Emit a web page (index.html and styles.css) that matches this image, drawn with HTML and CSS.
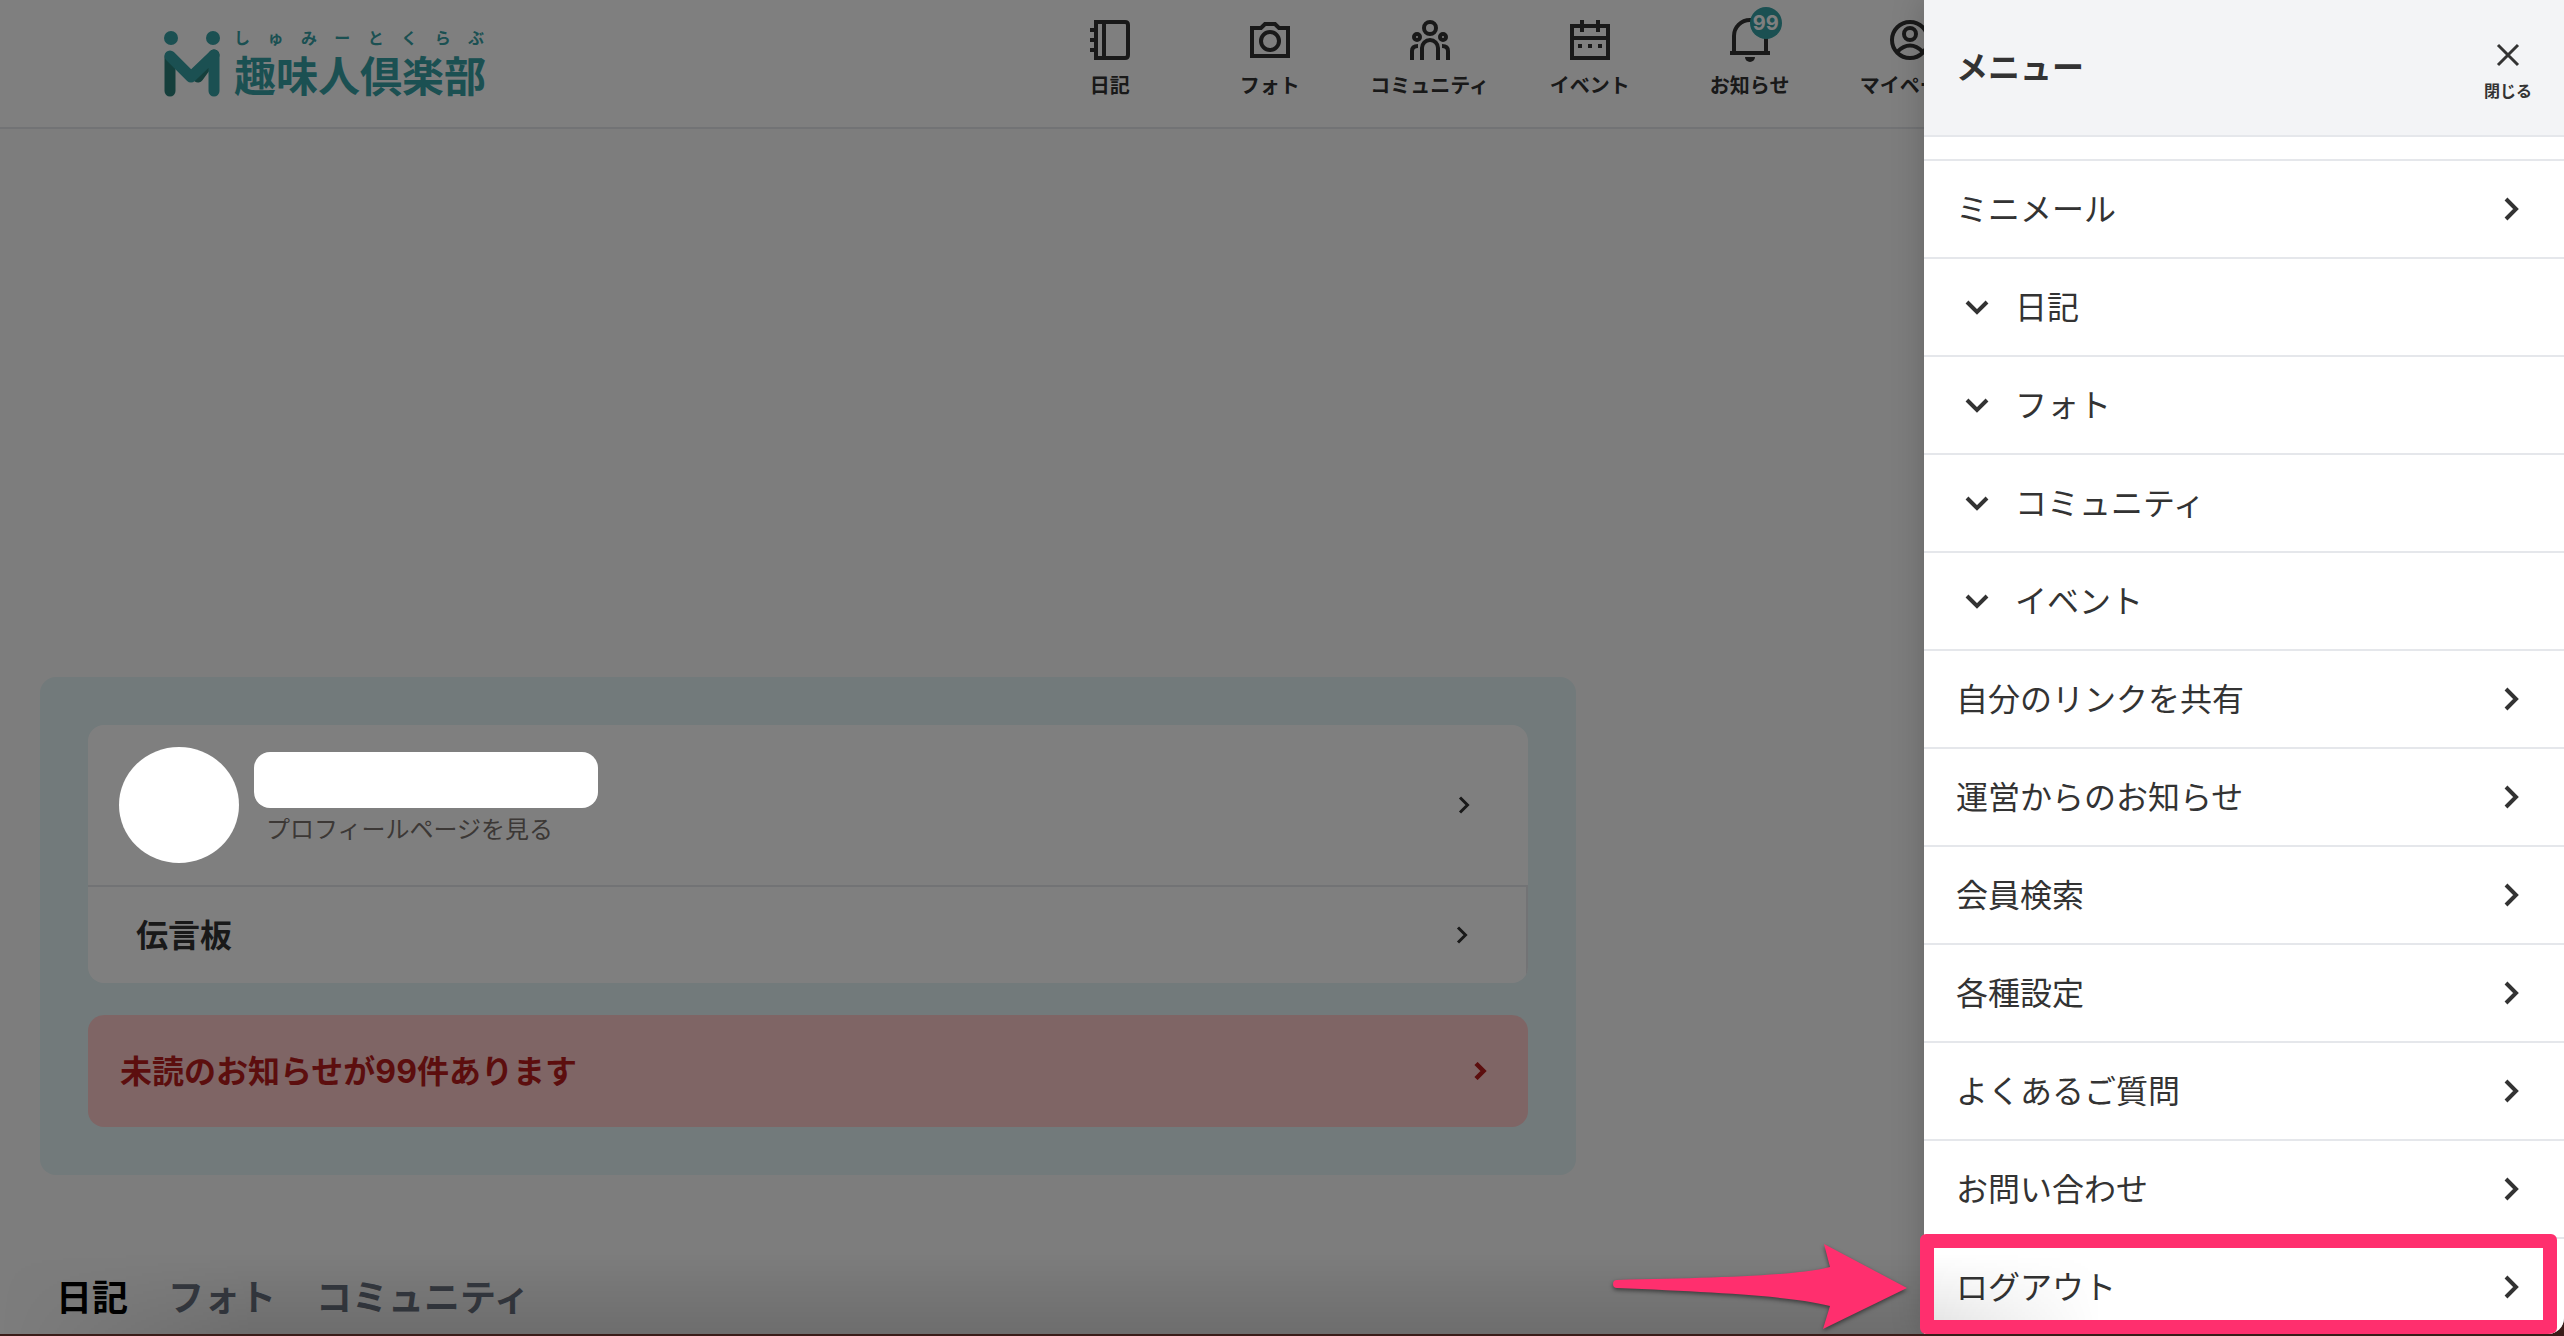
FILE: index.html
```html
<!DOCTYPE html>
<html lang="ja">
<head>
  <meta charset="UTF-8">
  <title>趣味人倶楽部</title>
  <link rel="stylesheet" href="styles.css">
</head>
<body>
  <svg class="sprite" aria-hidden="true">
    <symbol id="right" viewBox="0 0 24 24"><path d="M8 2l10 10L8 22"/></symbol>
    <symbol id="down" viewBox="0 0 24 24"><path d="M2 7l10 10L22 7"/></symbol>
  </svg>

  <div class="window">
    <header class="site-header">
      <a class="logo" href="#">
        <svg class="logo-mark" viewBox="0 0 56 66">
          <path d="M6 26v34" stroke="#2a7f79"/>
          <path d="M50 24L34 46" stroke="#2a7f79"/>
          <path d="M6 25l21 21L50 24v36" stroke="#36a1a5"/>
          <circle cx="7" cy="7" r="7"/>
          <circle cx="49" cy="7" r="7"/>
        </svg>
        <span class="logo-text">
          <span class="logo-kana"><span>し</span><span>ゅ</span><span>み</span><span>ー</span><span>と</span><span>く</span><span>ら</span><span>ぶ</span></span>
          <span class="logo-name">趣味人倶楽部</span>
        </span>
      </a>
      <nav class="site-nav">
        <a href="#">
          <svg viewBox="0 0 40 40"><path d="M6 2h29q3 0 3 3v30q0 3-3 3H6zM14 2v36M0 10h6M0 20h6M0 30h6"/></svg>
          日記
        </a>
        <a href="#">
          <svg viewBox="0 0 40 40"><path d="M2 8h9l4-4h10l4 4h9v28H2z"/><circle cx="20" cy="21" r="9"/></svg>
          フォト
        </a>
        <a href="#">
          <svg viewBox="0 0 40 40"><circle cx="20" cy="8" r="6"/><circle cx="7" cy="17" r="3"/><circle cx="33" cy="17" r="3"/><path d="M12 40V28a8 8 0 0 1 16 0v12M2 40V31q0-5 6-5M38 40V31q0-5-6-5"/></svg>
          コミュニティ
        </a>
        <a href="#">
          <svg viewBox="0 0 40 40"><path d="M2 6h36v32H2zM2 18h36M12 0v12M28 0v12M8 26h4M18 26h4M28 26h4"/></svg>
          イベント
        </a>
        <a href="#">
          <svg viewBox="0 0 40 40"><path d="M4 32V16a16 16 0 0 1 32 0v16M0 33h40"/><path class="solid" d="M15 37h10a5 5 0 0 1-10 0z"/></svg>
          お知らせ
          <span class="badge">99</span>
        </a>
        <a href="#">
          <svg viewBox="0 0 40 40"><circle cx="20" cy="20" r="18"/><circle cx="20" cy="14" r="6"/><path d="M7 32q13-13 26 0"/></svg>
          マイページ
        </a>
      </nav>
    </header>

    <main class="content">
      <section class="mypage">
        <div class="card">
          <a class="profile" href="#">
            <span class="avatar"></span>
            <span class="profile-text">
              <span class="profile-name"></span>
              <span class="profile-note">プロフィールページを見る</span>
            </span>
            <svg class="chevron"><use href="#right"/></svg>
          </a>
          <a class="board" href="#">
            伝言板
            <svg class="chevron"><use href="#right"/></svg>
          </a>
        </div>
        <a class="alert" href="#">
          未読のお知らせが99件あります
          <svg class="chevron"><use href="#right"/></svg>
        </a>
      </section>

      <div class="tabs">
        <button class="active">日記</button>
        <button>フォト</button>
        <button>コミュニティ</button>
      </div>
    </main>

    <div class="overlay"></div>

    <aside class="drawer">
      <div class="drawer-header">
        <h2>メニュー</h2>
        <button class="close">
          <svg viewBox="0 0 24 24"><path d="M2 2l20 20M22 2L2 22"/></svg>
          閉じる
        </button>
      </div>
      <ul class="menu">
        <li><a href="#">ミニメール<svg class="chevron"><use href="#right"/></svg></a></li>
        <li><button><svg class="chevron"><use href="#down"/></svg>日記</button></li>
        <li><button><svg class="chevron"><use href="#down"/></svg>フォト</button></li>
        <li><button><svg class="chevron"><use href="#down"/></svg>コミュニティ</button></li>
        <li><button><svg class="chevron"><use href="#down"/></svg>イベント</button></li>
        <li><a href="#">自分のリンクを共有<svg class="chevron"><use href="#right"/></svg></a></li>
        <li><a href="#">運営からのお知らせ<svg class="chevron"><use href="#right"/></svg></a></li>
        <li><a href="#">会員検索<svg class="chevron"><use href="#right"/></svg></a></li>
        <li><a href="#">各種設定<svg class="chevron"><use href="#right"/></svg></a></li>
        <li><a href="#">よくあるご質問<svg class="chevron"><use href="#right"/></svg></a></li>
        <li><a href="#">お問い合わせ<svg class="chevron"><use href="#right"/></svg></a></li>
        <li><a href="#">ログアウト<svg class="chevron"><use href="#right"/></svg></a></li>
      </ul>
    </aside>

    <div class="shade"></div>
    <div class="highlight"></div>
    <svg class="arrow" viewBox="0 0 294 86">
      <path d="M4 36C100 34 182 32 217 23L211 0L294 44L210 85L217 62C180 52 100 48 4 44A4 4 0 0 1 4 36Z"/>
    </svg>
  </div>
</body>
</html>
```

FILE: styles.css
```css
* {
  box-sizing: border-box;
}

body {
  margin: 0;
  padding-bottom: 2px;
  height: 100vh;
  background: #3a1c18;
  color: #333;
  font-family: Inter, "Noto Sans CJK JP", sans-serif;
  overflow: hidden;
}

a {
  color: inherit;
  text-decoration: none;
}

button {
  padding: 0;
  border: none;
  background: none;
  color: inherit;
  font: inherit;
  cursor: pointer;
}

svg {
  fill: none;
  stroke: currentColor;
  stroke-width: 4;
}

.sprite {
  display: none;
}

.window {
  position: relative;
  height: 100%;
  overflow: hidden;
  background: #fafafa;
  border-bottom-right-radius: 16px;
}

/* header */
.site-header {
  display: flex;
  align-items: flex-start;
  justify-content: space-between;
  height: 129px;
  padding: 20px 22.4% 0 6.4%;
  background: #fff;
  border-bottom: 2px solid #e5e7eb;
}

.logo {
  display: flex;
  gap: 14px;
  margin-top: 11px;
  color: #36a1a5;
}

.logo-mark {
  width: 56px;
  height: 66px;
  stroke-width: 11;
  stroke-linecap: round;
  stroke-linejoin: round;
}

.logo-mark circle {
  fill: #36a1a5;
  stroke: none;
}

.logo-text {
  display: flex;
  flex-direction: column;
  width: 250px;
  font-weight: bold;
}

.logo-kana {
  display: flex;
  justify-content: space-between;
  font-size: 16px;
  line-height: 14px;
}

.logo-name {
  font-size: 42px;
  line-height: 64px;
  white-space: nowrap;
}

.site-nav {
  display: flex;
}

.site-nav a {
  position: relative;
  display: flex;
  flex-direction: column;
  align-items: center;
  gap: 12px;
  width: 160px;
  font-size: 20px;
  font-weight: bold;
  line-height: 28px;
}

.site-nav svg {
  width: 40px;
  height: 40px;
  overflow: visible;
}

.site-nav .solid {
  fill: currentColor;
  stroke: none;
}

.badge {
  position: absolute;
  top: -13px;
  left: 80px;
  width: 32px;
  height: 32px;
  border-radius: 50%;
  background: #36a1a5;
  color: #fff;
  font-size: 20px;
  line-height: 32px;
  text-align: center;
}

/* my page panel */
.content {
  width: 1616px;
  max-width: 100%;
  padding: 548px 40px 0;
}

.mypage {
  padding: 48px;
  border-radius: 16px;
  background: #e4f4f6;
}

.card {
  overflow: hidden;
  margin-bottom: 32px;
  border-radius: 16px;
  background: #fff;
}

.chevron {
  width: 24px;
  height: 24px;
}

.mypage .chevron {
  width: 18px;
  height: 18px;
  margin-left: auto;
}

.profile {
  display: flex;
  align-items: center;
  gap: 15px;
  height: 162px;
  padding: 0 56px 0 31px;
  border-bottom: 2px solid #e5e7eb;
}

.avatar {
  width: 120px;
  height: 116px;
  border-radius: 50%;
  background: #fff;
}

.profile-text {
  display: flex;
  flex-direction: column;
  gap: 4px;
  padding-bottom: 10px;
}

.profile-name {
  width: 344px;
  height: 56px;
  border-radius: 16px;
  background: #fff;
}

.avatar,
.profile-name {
  position: relative;
  z-index: 3;
}

.profile-note {
  padding-left: 12px;
  color: #78716c;
  font-size: 24px;
  line-height: 36px;
}

.board {
  display: flex;
  align-items: center;
  height: 96px;
  padding: 0 56px 4px 48px;
  border-right: 2px solid #e5e7eb;
  font-size: 32px;
  font-weight: bold;
}

.alert {
  display: flex;
  align-items: center;
  height: 112px;
  padding: 0 40px 4px 32px;
  border-radius: 16px;
  background: #fecaca;
  color: #b91c1c;
  font-size: 32px;
  font-weight: bold;
}

.board .chevron,
.alert .chevron,
.menu .chevron {
  margin-top: 4px;
}

.alert .chevron {
  stroke-width: 6;
}

.tabs {
  display: flex;
  gap: 40px;
  padding: 96px 16px 0;
  color: #6b7280;
  font-size: 36px;
  font-weight: bold;
  line-height: 54px;
}

.tabs .active {
  color: #000;
}

/* drawer */
.overlay {
  position: absolute;
  inset: 0;
  z-index: 2;
  background: rgba(0, 0, 0, 0.5);
}

.drawer {
  position: absolute;
  top: 0;
  right: 0;
  bottom: 0;
  z-index: 4;
  width: 640px;
  overflow: hidden;
  background: #fff;
  box-shadow: 0 0 32px rgba(0, 0, 0, 0.2);
}

.drawer-header {
  display: flex;
  align-items: center;
  justify-content: space-between;
  height: 137px;
  padding: 0 32px;
  border-bottom: 2px solid #e5e7eb;
  background: #f3f4f6;
}

.drawer-header h2 {
  margin: 0;
  font-size: 32px;
  line-height: 48px;
}

.close {
  display: flex;
  flex-direction: column;
  align-items: center;
  gap: 12px;
  padding-top: 10px;
  font-size: 16px;
  font-weight: bold;
  line-height: 24px;
}

.close svg {
  width: 24px;
  height: 24px;
  stroke-width: 3;
}

.menu {
  margin: 22px 0 0;
  padding: 0;
  list-style: none;
}

.menu li {
  border-top: 2px solid #e5e7eb;
}

.menu a,
.menu button {
  display: flex;
  align-items: center;
  width: 100%;
  height: 96px;
  padding: 0 42px 4px 32px;
  font-size: 32px;
}

.menu a {
  justify-content: space-between;
}

.menu button {
  gap: 26px;
  padding-left: 41px;
}

/* callout over the logout row */
.shade {
  position: absolute;
  left: 0;
  right: 18%;
  bottom: 0;
  z-index: 5;
  height: 80px;
  background: linear-gradient(transparent, rgba(0, 0, 0, 0.12));
  mask-image: linear-gradient(to right, transparent, #000 12%, #000 92%, transparent);
}

.highlight {
  position: absolute;
  right: 7px;
  bottom: 0;
  z-index: 6;
  width: 637px;
  height: 100px;
  border: 14px solid #ff2f6e;
  border-radius: 6px;
}

.arrow {
  position: absolute;
  right: 657px;
  bottom: 4px;
  z-index: 6;
  width: 294px;
  height: 86px;
  overflow: visible;
  fill: #ff2f6e;
  stroke: none;
  filter: drop-shadow(0 2px 2px rgba(0, 0, 0, 0.5));
}
```
